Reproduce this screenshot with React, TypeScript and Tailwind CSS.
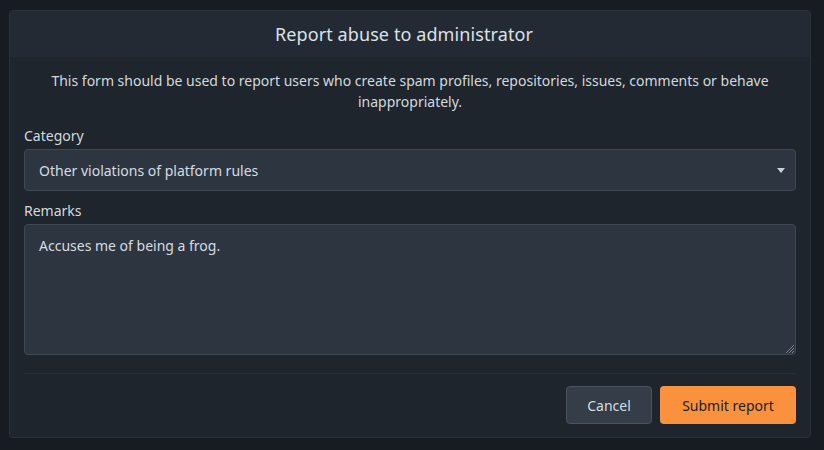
import React from "react";

export default function App() {
  return (
    <div
      className="w-[824px] h-[450px] bg-[#171c23] pt-[10px] pl-[9px]"
      style={{ fontFamily: '"Noto Sans", "Open Sans", sans-serif' }}
    >
      <div className="w-[802px] h-[428px] rounded-[4px] border border-[#2a323b] bg-[#1e252c] flex flex-col overflow-hidden">
        <div className="h-[46px] bg-[#232a33] flex items-center justify-center pr-[12px]">
          <h1 className="text-[18px] tracking-[0.1px] text-[#dce1e7] leading-none">Report abuse to administrator</h1>
        </div>
        <div className="px-[14px] pt-[13px] flex flex-col">
          <p className="text-center text-[14px] leading-[21px] text-[#d3d9df] px-[20px]">
            This form should be used to report users who create spam profiles, repositories, issues, comments or behave inappropriately.
          </p>
          <label className="mt-[13px] text-[14px] leading-[21px] text-[#d3d9df]">Category</label>
          <div className="mt-[3px] h-[42px] rounded-[4px] border border-[#3f4953] bg-[#2d3640] flex items-center justify-between pl-[14px] pr-[10px]">
            <span className="text-[14px] text-[#d6dce2]">Other violations of platform rules</span>
            <svg width="8" height="5" viewBox="0 0 8 5">
              <path d="M0 0 L8 0 L4 5 Z" fill="#c9d0d7" />
            </svg>
          </div>
          <label className="mt-[9px] text-[14px] leading-[21px] text-[#d3d9df]">Remarks</label>
          <div className="relative mt-[3px] h-[131px] rounded-[4px] border border-[#3f4953] bg-[#2d3640] px-[14px] pt-[8px]">
            <span className="text-[14px] leading-[21px] text-[#d6dce2]">Accuses me of being a frog.</span>
            <svg className="absolute right-[1px] bottom-[1px]" width="9" height="9" viewBox="0 0 9 9">
              <path d="M9 1 L1 9 M9 4 L4 9 M9 7 L7 9" stroke="#7a838c" strokeWidth="1" />
            </svg>
          </div>
          <div className="mt-[18px] h-px bg-[#262d35]" />
          <div className="mt-[12px] flex justify-end gap-[8px]">
            <button className="w-[86px] h-[38px] rounded-[4px] border border-[#4a535e] bg-[#343d48] text-[14px] text-[#d6dce2]">
              Cancel
            </button>
            <button className="w-[136px] h-[38px] rounded-[4px] bg-[#f9913d] text-[14px] text-[#1c1f23]">
              Submit report
            </button>
          </div>
        </div>
      </div>
    </div>
  );
}
